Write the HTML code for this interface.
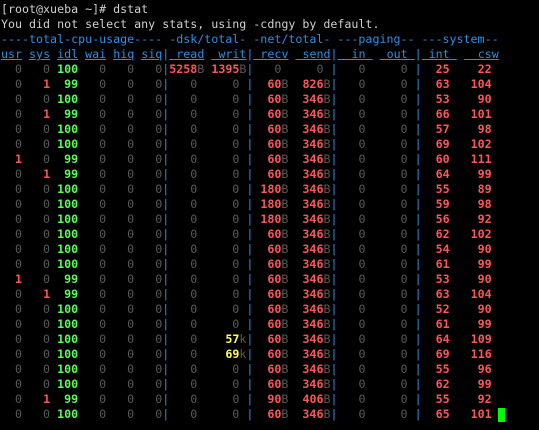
<!DOCTYPE html>
<html><head><meta charset="utf-8"><style>
html,body{margin:0;padding:0;background:#000;width:539px;height:430px;overflow:hidden}
pre{margin:0;position:absolute;left:1px;top:2px;font-family:"DejaVu Sans Mono","Liberation Mono",monospace;font-size:11.65px;line-height:15px;color:#d0d0d0;white-space:pre}
i,b{font-style:normal;font-weight:normal}
.g{color:#5a5a5a}.G{color:#55ff55;font-weight:bold}.r{color:#ff5555;font-weight:bold}.y{color:#ffff55;font-weight:bold}
.bl,b{color:#2b8fe6}.u{text-decoration:underline;color:#2b8fe6}
.cur{position:absolute;left:498px;top:408px;width:7px;height:14px;background:#00ff00}
</style></head><body><pre>[root@xueba ~]# dstat
You did not select any stats, using -cdngy by default.
<b>----total-cpu-usage---- -dsk/total- -net/total- ---paging-- ---system--</b>
<i class=u>usr</i> <i class=u>sys</i> <i class=u>idl</i> <i class=u>wai</i> <i class=u>hiq</i> <i class=u>siq</i><b>|</b><i class=u> read</i> <i class=u> writ</i><b>|</b><i class=u> recv</i> <i class=u> send</i><b>|</b><i class=u>  in </i> <i class=u> out </i><b>|</b><i class=u> int </i> <i class=u>  csw</i>
<i class=g>  0   0</i> <i class=G>100</i><i class=g>   0   0   0</i><b>|</b><i class=r>5258</i><i class=g>B</i> <i class=r>1395</i><i class=g>B</i><b>|</b><i class=g>   0     0 </i><b>|</b><i class=g>   0     0 </i><b>|</b><i class=r>  25    22</i>
<i class=g>  0</i> <i class=r>  1</i> <i class=G> 99</i><i class=g>   0   0   0</i><b>|</b><i class=g>   0     0 </i><b>|</b><i class=r>  60</i><i class=g>B</i><i class=r>  826</i><i class=g>B</i><b>|</b><i class=g>   0     0 </i><b>|</b><i class=r>  63   104</i>
<i class=g>  0   0</i> <i class=G>100</i><i class=g>   0   0   0</i><b>|</b><i class=g>   0     0 </i><b>|</b><i class=r>  60</i><i class=g>B</i><i class=r>  346</i><i class=g>B</i><b>|</b><i class=g>   0     0 </i><b>|</b><i class=r>  53    90</i>
<i class=g>  0</i> <i class=r>  1</i> <i class=G> 99</i><i class=g>   0   0   0</i><b>|</b><i class=g>   0     0 </i><b>|</b><i class=r>  60</i><i class=g>B</i><i class=r>  346</i><i class=g>B</i><b>|</b><i class=g>   0     0 </i><b>|</b><i class=r>  66   101</i>
<i class=g>  0   0</i> <i class=G>100</i><i class=g>   0   0   0</i><b>|</b><i class=g>   0     0 </i><b>|</b><i class=r>  60</i><i class=g>B</i><i class=r>  346</i><i class=g>B</i><b>|</b><i class=g>   0     0 </i><b>|</b><i class=r>  57    98</i>
<i class=g>  0   0</i> <i class=G>100</i><i class=g>   0   0   0</i><b>|</b><i class=g>   0     0 </i><b>|</b><i class=r>  60</i><i class=g>B</i><i class=r>  346</i><i class=g>B</i><b>|</b><i class=g>   0     0 </i><b>|</b><i class=r>  69   102</i>
<i class=r>  1</i><i class=g>   0</i> <i class=G> 99</i><i class=g>   0   0   0</i><b>|</b><i class=g>   0     0 </i><b>|</b><i class=r>  60</i><i class=g>B</i><i class=r>  346</i><i class=g>B</i><b>|</b><i class=g>   0     0 </i><b>|</b><i class=r>  60   111</i>
<i class=g>  0</i> <i class=r>  1</i> <i class=G> 99</i><i class=g>   0   0   0</i><b>|</b><i class=g>   0     0 </i><b>|</b><i class=r>  60</i><i class=g>B</i><i class=r>  346</i><i class=g>B</i><b>|</b><i class=g>   0     0 </i><b>|</b><i class=r>  64    99</i>
<i class=g>  0   0</i> <i class=G>100</i><i class=g>   0   0   0</i><b>|</b><i class=g>   0     0 </i><b>|</b><i class=r> 180</i><i class=g>B</i><i class=r>  346</i><i class=g>B</i><b>|</b><i class=g>   0     0 </i><b>|</b><i class=r>  55    89</i>
<i class=g>  0   0</i> <i class=G>100</i><i class=g>   0   0   0</i><b>|</b><i class=g>   0     0 </i><b>|</b><i class=r> 180</i><i class=g>B</i><i class=r>  346</i><i class=g>B</i><b>|</b><i class=g>   0     0 </i><b>|</b><i class=r>  59    98</i>
<i class=g>  0   0</i> <i class=G>100</i><i class=g>   0   0   0</i><b>|</b><i class=g>   0     0 </i><b>|</b><i class=r> 180</i><i class=g>B</i><i class=r>  346</i><i class=g>B</i><b>|</b><i class=g>   0     0 </i><b>|</b><i class=r>  56    92</i>
<i class=g>  0   0</i> <i class=G>100</i><i class=g>   0   0   0</i><b>|</b><i class=g>   0     0 </i><b>|</b><i class=r>  60</i><i class=g>B</i><i class=r>  346</i><i class=g>B</i><b>|</b><i class=g>   0     0 </i><b>|</b><i class=r>  62   102</i>
<i class=g>  0   0</i> <i class=G>100</i><i class=g>   0   0   0</i><b>|</b><i class=g>   0     0 </i><b>|</b><i class=r>  60</i><i class=g>B</i><i class=r>  346</i><i class=g>B</i><b>|</b><i class=g>   0     0 </i><b>|</b><i class=r>  54    90</i>
<i class=g>  0   0</i> <i class=G>100</i><i class=g>   0   0   0</i><b>|</b><i class=g>   0     0 </i><b>|</b><i class=r>  60</i><i class=g>B</i><i class=r>  346</i><i class=g>B</i><b>|</b><i class=g>   0     0 </i><b>|</b><i class=r>  61    99</i>
<i class=r>  1</i><i class=g>   0</i> <i class=G> 99</i><i class=g>   0   0   0</i><b>|</b><i class=g>   0     0 </i><b>|</b><i class=r>  60</i><i class=g>B</i><i class=r>  346</i><i class=g>B</i><b>|</b><i class=g>   0     0 </i><b>|</b><i class=r>  53    90</i>
<i class=g>  0</i> <i class=r>  1</i> <i class=G> 99</i><i class=g>   0   0   0</i><b>|</b><i class=g>   0     0 </i><b>|</b><i class=r>  60</i><i class=g>B</i><i class=r>  346</i><i class=g>B</i><b>|</b><i class=g>   0     0 </i><b>|</b><i class=r>  63   104</i>
<i class=g>  0   0</i> <i class=G>100</i><i class=g>   0   0   0</i><b>|</b><i class=g>   0     0 </i><b>|</b><i class=r>  60</i><i class=g>B</i><i class=r>  346</i><i class=g>B</i><b>|</b><i class=g>   0     0 </i><b>|</b><i class=r>  52    90</i>
<i class=g>  0   0</i> <i class=G>100</i><i class=g>   0   0   0</i><b>|</b><i class=g>   0     0 </i><b>|</b><i class=r>  60</i><i class=g>B</i><i class=r>  346</i><i class=g>B</i><b>|</b><i class=g>   0     0 </i><b>|</b><i class=r>  61    99</i>
<i class=g>  0   0</i> <i class=G>100</i><i class=g>   0   0   0</i><b>|</b><i class=g>   0    </i><i class=y>57</i><i class=g>k</i><b>|</b><i class=r>  60</i><i class=g>B</i><i class=r>  346</i><i class=g>B</i><b>|</b><i class=g>   0     0 </i><b>|</b><i class=r>  64   109</i>
<i class=g>  0   0</i> <i class=G>100</i><i class=g>   0   0   0</i><b>|</b><i class=g>   0    </i><i class=y>69</i><i class=g>k</i><b>|</b><i class=r>  60</i><i class=g>B</i><i class=r>  346</i><i class=g>B</i><b>|</b><i class=g>   0     0 </i><b>|</b><i class=r>  69   116</i>
<i class=g>  0   0</i> <i class=G>100</i><i class=g>   0   0   0</i><b>|</b><i class=g>   0     0 </i><b>|</b><i class=r>  60</i><i class=g>B</i><i class=r>  346</i><i class=g>B</i><b>|</b><i class=g>   0     0 </i><b>|</b><i class=r>  55    96</i>
<i class=g>  0   0</i> <i class=G>100</i><i class=g>   0   0   0</i><b>|</b><i class=g>   0     0 </i><b>|</b><i class=r>  60</i><i class=g>B</i><i class=r>  346</i><i class=g>B</i><b>|</b><i class=g>   0     0 </i><b>|</b><i class=r>  62    99</i>
<i class=g>  0</i> <i class=r>  1</i> <i class=G> 99</i><i class=g>   0   0   0</i><b>|</b><i class=g>   0     0 </i><b>|</b><i class=r>  90</i><i class=g>B</i><i class=r>  406</i><i class=g>B</i><b>|</b><i class=g>   0     0 </i><b>|</b><i class=r>  55    92</i>
<i class=g>  0   0</i> <i class=G>100</i><i class=g>   0   0   0</i><b>|</b><i class=g>   0     0 </i><b>|</b><i class=r>  60</i><i class=g>B</i><i class=r>  346</i><i class=g>B</i><b>|</b><i class=g>   0     0 </i><b>|</b><i class=r>  65   101</i></pre>
<div class="cur"></div>
</body></html>
